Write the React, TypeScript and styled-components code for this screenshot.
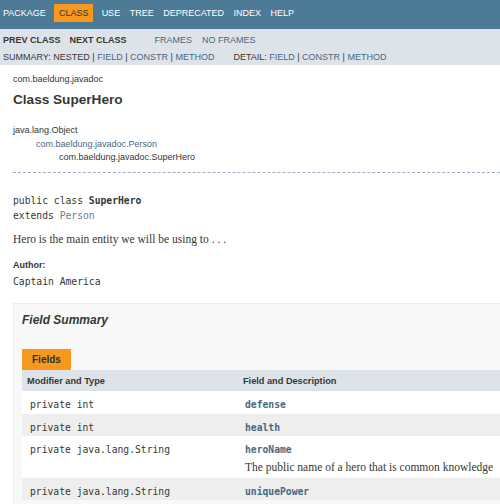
import React from "react";
import styled, { createGlobalStyle } from "styled-components";

const Global = createGlobalStyle`
  html, body { margin: 0; padding: 0; overflow: hidden; background: #ffffff; }
  body { font-family: "Liberation Sans", Arial, sans-serif; color: #353833; }
  * { box-sizing: border-box; }
`;

const Page = styled.div`
  width: 500px;
  height: 504px;
  overflow: hidden;
`;

const TopNav = styled.ul`
  display: flex;
  align-items: center;
  height: 29px;
  margin: 0;
  padding: 0;
  list-style: none;
  background: #4d7a97;
  font-size: 9px;
`;

const NavItem = styled.li<{ $active?: boolean; $first?: boolean }>`
  display: flex;
  align-items: center;
  height: 18.5px;
  padding-left: ${(p) => (p.$first ? "3px" : "4.75px")};
  padding-right: ${(p) => (p.$first ? "8.5px" : "4.75px")};
  margin-right: ${(p) => (p.$active ? "3.5px" : "0")};
  margin-top: -3px;
  background: ${(p) => (p.$active ? "#f8981d" : "transparent")};
  color: ${(p) => (p.$active ? "#253441" : "#ffffff")};
`;

const SubNav = styled.div`
  background: #dee3e9;
  height: 36px;
  padding: 3px 0 0 3px;
  font-size: 9px;
`;

const SubRow = styled.div`
  display: flex;
  align-items: center;
  height: 16.5px;
`;

const SubItem = styled.span<{ $bold?: boolean; $link?: boolean; $gap?: number }>`
  font-weight: ${(p) => (p.$bold ? 700 : 400)};
  color: ${(p) => (p.$link ? "#4a6782" : "#353833")};
  margin-right: ${(p) => p.$gap ?? 0}px;
  white-space: pre;
`;

const Link = styled.span`
  color: #4a6782;
`;

const Content = styled.div`
  padding: 0 0 0 13px;
`;

const PkgLabel = styled.div`
  font-size: 9px;
  line-height: 12px;
  margin-top: 8px;
`;

const Title = styled.h2`
  margin: 7px 0 0 0;
  font-size: 13.6px;
  line-height: 16px;
  font-weight: 700;
`;

const Tree = styled.div`
  margin-top: 16px;
  font-size: 9px;
  line-height: 13.5px;
`;

const TreeLine = styled.div<{ $indent: number; $link?: boolean }>`
  padding-left: ${(p) => p.$indent}px;
  color: ${(p) => (p.$link ? "#4a6782" : "#353833")};
`;

const Rule = styled.hr`
  margin: 7px 0 0 0;
  border: 0;
  border-top: 1px dashed #9eadc0;
  height: 0;
`;

const Code = styled.pre`
  margin: 20px 0 0 0;
  font-family: "DejaVu Sans Mono", "Liberation Mono", monospace;
  font-size: 9.7px;
  line-height: 15px;
  color: #353833;
`;

const Strong = styled.b`
  font-weight: 700;
`;

const MutedLink = styled.span`
  color: #6b7b8c;
`;

const Block = styled.div`
  margin-top: 9px;
  font-family: "Liberation Serif", "Times New Roman", serif;
  font-size: 11.5px;
  line-height: 14px;
  color: #353833;
`;

const Dt = styled.div`
  margin-top: 13px;
  font-size: 9px;
  line-height: 12px;
  font-weight: 700;
`;

const Dd = styled.div`
  margin-top: 4px;
  font-family: "DejaVu Sans Mono", "Liberation Mono", monospace;
  font-size: 9.7px;
  line-height: 14px;
`;

const SummaryBox = styled.section`
  margin-top: 14px;
  width: 520px;
  height: 240px;
  background: #f8f8f8;
  border: 1px solid #ededed;
  padding: 9.5px 0 0 8px;
`;

const SummaryTitle = styled.h3`
  margin: 0;
  font-size: 12px;
  line-height: 15px;
  font-style: italic;
  font-weight: 700;
`;

const Tab = styled.div`
  margin-top: 20.5px;
  display: inline-flex;
  align-items: center;
  height: 21px;
  padding: 0 10px;
  background: #f8981d;
  color: #253441;
  font-size: 10px;
  font-weight: 700;
`;

const Table = styled.table`
  border-collapse: collapse;
  width: 520px;
  table-layout: fixed;
`;

const Th = styled.th`
  background: #dee3e9;
  height: 21px;
  padding: 2px 0 0 5px;
  text-align: left;
  font-size: 9.2px;
  font-weight: 700;
  vertical-align: middle;
`;

const Tr = styled.tr<{ $alt?: boolean }>`
  background: ${(p) => (p.$alt ? "#eeeeef" : "#ffffff")};
`;

const Td = styled.td<{ $h: number }>`
  height: ${(p) => p.$h}px;
  padding: 8px 3px 0 8px;
  vertical-align: top;
  font-family: "DejaVu Sans Mono", "Liberation Mono", monospace;
  font-size: 9.7px;
  line-height: 12px;
  color: #353833;
`;

const TdName = styled(Td)`
  padding-left: 7px;
`;

const FieldName = styled.div`
  font-weight: 700;
  color: #4a6782;
`;

const FieldDesc = styled.div`
  margin-top: 5px;
  font-family: "Liberation Serif", "Times New Roman", serif;
  font-size: 11.5px;
  line-height: 12px;
  white-space: nowrap;
`;

const navItems = ["PACKAGE", "CLASS", "USE", "TREE", "DEPRECATED", "INDEX", "HELP"];

const fields = [
  { type: "private int", name: "defense", h: 23 },
  { type: "private int", name: "health", h: 22 },
  {
    type: "private java.lang.String",
    name: "heroName",
    desc: "The public name of a hero that is common knowledge",
    h: 42,
  },
  { type: "private java.lang.String", name: "uniquePower", h: 22 },
];

export default function App() {
  return (
    <Page>
      <Global />
      <TopNav>
        {navItems.map((n, i) => (
          <NavItem key={n} $active={n === "CLASS"} $first={i === 0}>
            {n}
          </NavItem>
        ))}
      </TopNav>
      <SubNav>
        <SubRow>
          <SubItem $bold $gap={9}>PREV CLASS</SubItem>
          <SubItem $bold $gap={28}>NEXT CLASS</SubItem>
          <SubItem $link $gap={10}>FRAMES</SubItem>
          <SubItem $link>NO FRAMES</SubItem>
        </SubRow>
        <SubRow>
          <SubItem $gap={19}>
            SUMMARY: NESTED | <Link>FIELD</Link> | <Link>CONSTR</Link> | <Link>METHOD</Link>
          </SubItem>
          <SubItem>
            DETAIL: <Link>FIELD</Link> | <Link>CONSTR</Link> | <Link>METHOD</Link>
          </SubItem>
        </SubRow>
      </SubNav>
      <Content>
        <PkgLabel>com.baeldung.javadoc</PkgLabel>
        <Title>Class SuperHero</Title>
        <Tree>
          <TreeLine $indent={0}>java.lang.Object</TreeLine>
          <TreeLine $indent={23} $link>com.baeldung.javadoc.Person</TreeLine>
          <TreeLine $indent={46}>com.baeldung.javadoc.SuperHero</TreeLine>
        </Tree>
        <Rule />
        <Code>
          public class <Strong>SuperHero</Strong>
          {"\n"}extends <MutedLink>Person</MutedLink>
        </Code>
        <Block>Hero is the main entity we will be using to . . .</Block>
        <Dt>Author:</Dt>
        <Dd>Captain America</Dd>
        <SummaryBox>
          <SummaryTitle>Field Summary</SummaryTitle>
          <Tab>Fields</Tab>
          <Table>
            <colgroup>
              <col style={{ width: 216 }} />
              <col />
            </colgroup>
            <thead>
              <tr>
                <Th>Modifier and Type</Th>
                <Th>Field and Description</Th>
              </tr>
            </thead>
            <tbody>
              {fields.map((f, i) => (
                <Tr key={f.name} $alt={i % 2 === 1}>
                  <Td $h={f.h}>{f.type}</Td>
                  <TdName $h={f.h}>
                    <FieldName>{f.name}</FieldName>
                    {f.desc && <FieldDesc>{f.desc}</FieldDesc>}
                  </TdName>
                </Tr>
              ))}
            </tbody>
          </Table>
        </SummaryBox>
      </Content>
    </Page>
  );
}
